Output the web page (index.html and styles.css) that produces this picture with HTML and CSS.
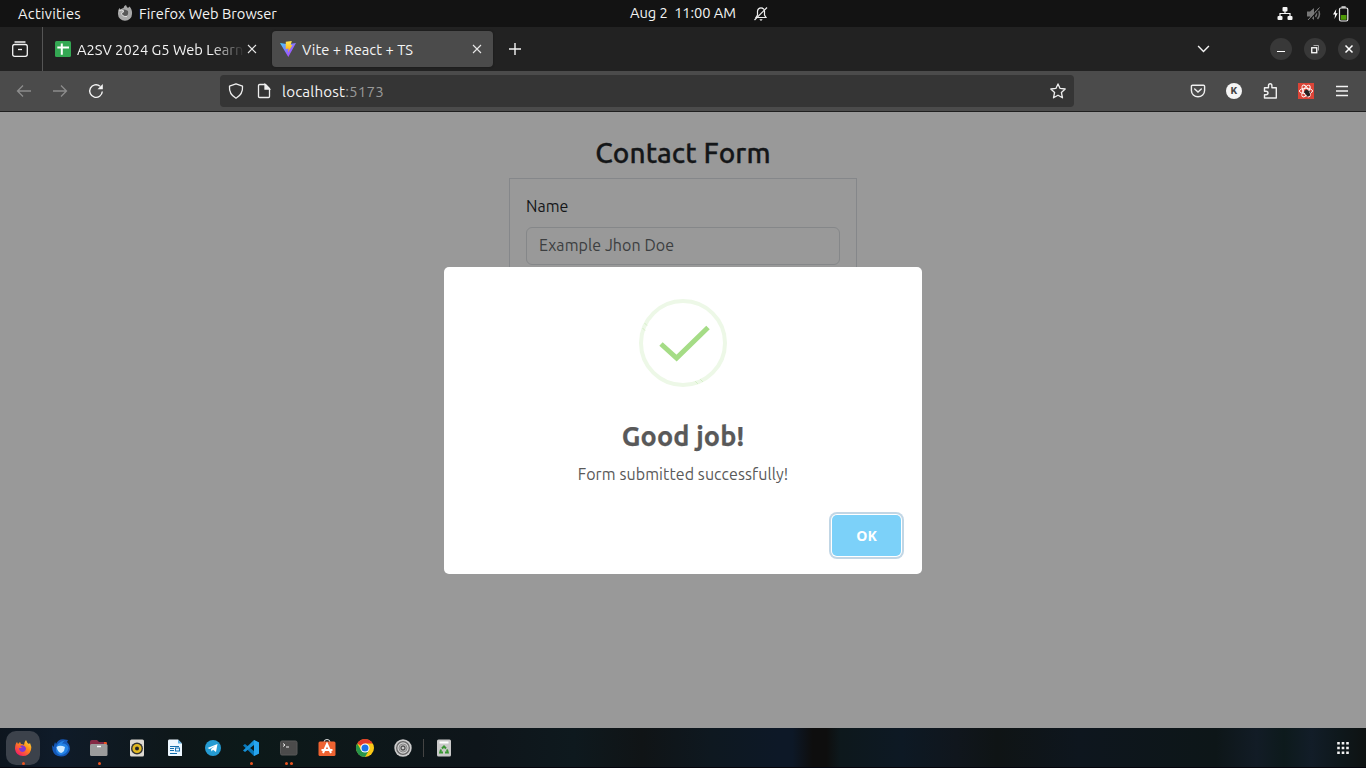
FILE: index.html
```html
<!DOCTYPE html>
<html lang="en">
<head>
<meta charset="utf-8">
<title>Vite + React + TS</title>
<link rel="stylesheet" href="styles.css">
</head>
<body>
<header class="topbar">
  <span class="activities">Activities</span>
  <svg class="i16 app-icon" viewBox="0 0 16 16"><path d="M1 7Q1 3.500 2.500 2L3.500 3.500Q5 2 6.500 2Q7 -.5 9 -1Q9.500 1 11 2L12.500 .5Q15.300 3 15 8A7 6.700 0 0 1 1 8Z" fill="#a8a8a8"/><path d="M5 4Q8 2.500 11 5Q12 10 8 10Q5 10 4.500 7L7 6.500Z" fill="#585858"/><path d="M2 5Q4 3 7 5L4.500 7Q5 11 10 10.500" fill="none" stroke="#ddd"/></svg>
  <span class="appname">Firefox Web Browser</span>
  <span class="clock">Aug 2&nbsp; 11:00 AM</span>
  <svg class="i16 bell" viewBox="0 0 16 16" fill="none" stroke="#eee" stroke-width="1.2"><path d="M3 11.500H13L11.500 9V5Q11 1.800 8 1.800T4.500 5V9Z"/><path d="M1.500 14L14 1.500"/><path d="M6.300 13.300H9.700L8 15Z" fill="#eee" stroke="none"/></svg>
  <div class="tray">
    <svg class="i16" viewBox="0 0 16 16" fill="#f5f5f5"><rect x="5.500" y="1" width="5" height="4.500" rx="1"/><rect x="0.500" y="10" width="5" height="4" rx="1"/><rect x="10.500" y="10" width="5" height="4" rx="1"/><path d="M8 5V7.500M3 10V7.500H13V10" fill="none" stroke="#f5f5f5" stroke-width="1.200"/></svg>
    <svg class="i16" viewBox="0 0 16 16" fill="#777"><path d="M1 5.500H4L8 2V14L4 10.500H1Z"/><path d="M9.500 5Q11.500 8 9.500 11M11.500 3Q15.500 8 11.500 13" fill="none" stroke="#707070" stroke-width="1.500"/><path d="M2.500 15L14.500 2" stroke="#131313" stroke-width="1.200"/><path d="M2 14L13.500 1.500" stroke="#808080"/></svg>
    <svg class="i16" viewBox="0 0 16 16"><path d="M2.300 3L-1 8.500H1.100L.5 13L3.700 7.200H1.700Z" fill="#fff"/><rect x="5.500" y="2" width="8.300" height="13" rx="1.500" fill="none" stroke="#eee" stroke-width="1.200"/><path d="M7.500 1H11.700" stroke="#eee" stroke-width="1.400"/><rect x="6.800" y="9" width="5.700" height="4.800" fill="#4e9a06"/></svg>
  </div>
</header>

<nav class="tabs">
  <div class="view-btn"><svg class="i16" viewBox="0 0 16 16" fill="none" stroke="#f4f4f4" stroke-width="1.300"><path d="M3 1H13" stroke-linecap="round"/><path d="M.7 5.500Q.7 3.500 2.700 3.500H13.300Q15.300 3.500 15.300 5.500V13.300Q15.300 15.300 13.300 15.300H2.700Q.7 15.300 .7 13.300Z"/><path d="M6 8.500H10"/></svg></div>
  <div class="tab tab-first">
    <svg class="i16" viewBox="0 0 16 16"><rect width="16" height="16" rx="1.500" fill="#34a853"/><path d="M6.800 2.500V13.700M2.300 6.500H14" stroke="#fff" stroke-width="2"/></svg>
    <span class="tab-title fade">A2SV 2024 G5 Web Learn</span>
    <svg class="close" viewBox="0 0 10 10"><path d="M1 1L9 9M9 1L1 9"/></svg>
  </div>
  <div class="tab tab-active">
    <svg class="i16" viewBox="0 0 16 16"><defs><linearGradient id="v" x2="1" y2="1"><stop stop-color="#41d1ff"/><stop offset=".5" stop-color="#8a70ff"/><stop offset="1" stop-color="#bd34fe"/></linearGradient><linearGradient id="b" x2="0" y2="1"><stop stop-color="#ffea55"/><stop offset="1" stop-color="#ffa800"/></linearGradient></defs><path d="M0 2L8 3.200L16 2L8.300 16Z" fill="url(#v)"/><path d="M5.800 .7L11.800 0L10.600 4.200L12.500 4L8 11.500L8.600 7.400L5.700 8Z" fill="url(#b)"/></svg>
    <span class="tab-title vite">Vite + React + TS</span>
    <svg class="close" viewBox="0 0 10 10"><path d="M1 1L9 9M9 1L1 9"/></svg>
  </div>
  <svg class="plus" viewBox="0 0 12 12"><path d="M6 0V12M0 6H12" stroke="#f4f4f4" stroke-width="1.400"/></svg>
  <svg class="chev" viewBox="0 0 12 8"><path d="M.6 1L6 6.400L11.400 1" fill="none" stroke="#f4f4f4" stroke-width="1.400"/></svg>
  <div class="win"><svg class="i16" viewBox="0 0 16 16"><path d="M4 10.500H12" stroke="#fff"/></svg></div>
  <div class="win"><svg class="i16" viewBox="0 0 16 16" fill="none"><rect x="4.750" y="6.750" width="5" height="5" stroke="#fff" stroke-width="1.300"/><path d="M6.500 4.500H11.500V9.500" stroke="#aaa"/></svg></div>
  <div class="win"><svg class="i16" viewBox="0 0 16 16"><path d="M4.500 4.500L11.500 11.500M11.500 4.500L4.500 11.500" stroke="#fff" stroke-width="1.500"/></svg></div>
</nav>

<div class="toolbar">
  <svg class="i16 back" viewBox="0 0 16 16" fill="none" stroke="#8c8c8c" stroke-width="1.300"><path d="M15 8H1.500M7 2.500L1.500 8L7 13.500"/></svg>
  <svg class="i16 fwd" viewBox="0 0 16 16" fill="none" stroke="#8c8c8c" stroke-width="1.300"><path d="M1 8H14.500M9 2.500L14.500 8L9 13.500"/></svg>
  <svg class="i16 reload" viewBox="0 0 16 16" fill="none" stroke="#f5f5f5" stroke-width="1.400"><path d="M14.300 8.500A6.300 6.300 0 1 1 12 3.200"/><path d="M14.800 1V6.300H9.500Z" fill="#f5f5f5" stroke="none"/></svg>
  <div class="urlbar">
    <svg class="i16" viewBox="0 0 16 16" fill="none" stroke="#eee" stroke-width="1.300"><path d="M8 .8L14.500 3.200Q15.200 11 8 15.300Q.8 11 1.500 3.200Z" stroke-linejoin="round"/></svg>
    <svg class="i16 doc" viewBox="0 0 16 16" fill="none" stroke="#eee" stroke-width="1.300"><path d="M3.700 1.500H9.500L13.500 5.500V13.500Q13.500 14.500 12.500 14.500H3.700Q2.500 14.500 2.500 13.500V2.500Q2.500 1.500 3.700 1.500Z"/><path d="M9 1.500V6H13.500Z" fill="#eee"/></svg>
    <span class="url">localhost<b>:5173</b></span>
    <svg class="i16 star" viewBox="0 0 16 16" fill="none" stroke="#eee" stroke-width="1.300" stroke-linejoin="round"><path d="M8 .9L10.100 5.400L15.200 6L11.400 9.500L12.500 14.800L8 12.200L3.500 14.800L4.600 9.500L.8 6L5.900 5.400Z"/></svg>
  </div>
  <div class="tools">
    <svg class="i16" viewBox="0 0 16 16" fill="none" stroke="#f0f0f0" stroke-width="1.400" stroke-linecap="round"><path d="M2.500 2.200H13.500Q14.600 2.200 14.600 3.300V7.500A6.600 6.300 0 0 1 1.400 7.500V3.300Q1.400 2.200 2.500 2.200Z"/><path d="M4.700 6L8 9L11.300 6"/></svg>
    <span class="account">K</span>
    <svg class="i16" viewBox="0 0 16 16" fill="none" stroke="#f0f0f0" stroke-width="1.400" stroke-linejoin="round"><path d="M2.500 4.800H6.500V2.800Q6.500 .8 8.200 .8T9.900 2.800V4.800H14.300V15H2.500V11.800H4Q6 11.700 6 10T4 8.200H2.500Z"/></svg>
    <svg class="i16" viewBox="0 0 16 16"><rect width="16" height="16" fill="#db4437"/><g fill="none" stroke="#fff" stroke-width=".9"><ellipse cx="8" cy="8" rx="6.600" ry="2.700"/><ellipse cx="8" cy="8" rx="6.600" ry="2.700" transform="rotate(60 8 8)"/><ellipse cx="8" cy="8" rx="6.600" ry="2.700" transform="rotate(120 8 8)"/></g><ellipse cx="9.300" cy="10" rx="2" ry="3.500" fill="#222" transform="rotate(-35 9.300 10)"/><path d="M6 9L12 12.500M8 7L13 9.500M11 7.500L9 14" stroke="#222" stroke-width=".8"/></svg>
    <svg class="i16 menu" viewBox="0 0 16 16" stroke="#f4f4f4" stroke-width="1.300"><path d="M2 3.500H14M2 8H14M2 12.500H14"/></svg>
  </div>
</div>

<main class="page">
  <h1 class="heading">Contact Form</h1>
  <form class="card">
    <label class="label" for="name">Name</label>
    <input class="field" id="name" type="text" placeholder="Example Jhon Doe">
  </form>
  <section class="modal">
    <svg class="success" viewBox="0 0 88 88" fill="none"><circle cx="44" cy="44" r="42" stroke="#edf8e7" stroke-width="4"/><path d="M22 45L37.600 59L69 28.500" stroke="#a5dc86" stroke-width="5"/><path d="M3.500 29L6 31.500M5.500 24L8 26.500M56.500 82.500L59 85M61.500 80.500L64 83" stroke="#b5e29b" stroke-width=".7" stroke-dasharray=".8 .5"/></svg>
    <h2 class="title">Good job!</h2>
    <p class="message">Form submitted successfully!</p>
    <button class="ok">OK</button>
  </section>
</main>

<footer class="dock">
  <div class="app selected one"><svg viewBox="0 0 18 18"><defs><linearGradient id="f" x1="1" x2=".2" y2="1"><stop stop-color="#ffed45"/><stop offset=".45" stop-color="#ff8a16"/><stop offset="1" stop-color="#f5156c"/></linearGradient></defs><path d="M1 10Q1 5 3 3L4 5L6 3L7 5Q9 5 10 6Q10 3 12 1Q13 4 15 5L16 4Q18 8 17 11Q15 17 9 17Q2 17 1 10Z" fill="url(#f)"/><path d="M6 7Q10 5 12 9Q12 13 8 13Q5 12 5 9L8 9Z" fill="#8138cf"/></svg></div>
  <div class="app"><svg viewBox="0 0 18 18"><path d="M0 6L1.500 8L3 3L4 5Q6 .5 11 .3L16 1L15 3Q19 7 17.500 12Q15 17.500 9 17.500Q2 17 .5 11Z" fill="#1558b8"/><path d="M4 9Q5 3 13 1.500Q11 3 10 4.500Q15 4 16.500 9Q15 16 8 16Q3 14 4 9Z" fill="#2484e6"/><path d="M4.500 8Q8 5.500 13 8L12 12Q10 14 9 14Q5.500 13 4.500 8Z" fill="#cfeaff"/></svg></div>
  <div class="app one"><svg viewBox="0 0 18 18"><path d="M0 3Q0 1 2 1H7L9 3H16Q17 3 17 5V8H0Z" fill="#842944"/><path d="M14 3H16Q17 3 17 5H14Z" fill="#e95420"/><rect x="0" y="5" width="17.500" height="12" rx="1.500" fill="#9b9b9b"/><path d="M7 7.500H11" stroke="#fff" stroke-width="1.500"/></svg></div>
  <div class="app"><svg viewBox="0 0 18 18"><rect x="2" y=".5" width="14" height="17" rx="1.500" fill="#ded9d2"/><circle cx="9" cy="9.500" r="6" fill="#333"/><circle cx="9" cy="9.500" r="3.300" fill="none" stroke="#e2b820" stroke-width="2.600"/><circle cx="9" cy="9.500" r="1.500" fill="#222"/></svg></div>
  <div class="app"><svg viewBox="0 0 18 18"><path d="M3 .5H12L16 4.500V17H3Q2 17 2 16V2Q2 .5 3 .5Z" fill="#edf7ff"/><path d="M12 .5L16 4.500H12Z" fill="#62b0e0"/><path d="M4 7.500H13M4 9.500H8M4 11.500H8M4 14.500H11" stroke="#126dac" stroke-width="1.100"/><rect x="9.500" y="9" width="4" height="3" fill="none" stroke="#1473b5"/></svg></div>
  <div class="app"><svg viewBox="0 0 18 18"><circle cx="9" cy="9" r="8" fill="#259bd2"/><path d="M3.500 9L13.500 5L12 13L9 10.800L7.500 12.500L7 10L11 7L5.600 10Z" fill="#fff"/></svg></div>
  <div class="app one"><svg viewBox="0 0 18 18"><path d="M12 1L17 3.500V14.500L12 17L1 6.500L3 5L12 12Z" fill="#0877b9"/><path d="M12 1L1 11.500L3 13L12 6Z" fill="#1690d6"/><path d="M12 1L17 3.500V14.500L12 17Z" fill="#27a4ee"/></svg></div>
  <div class="app two"><svg viewBox="0 0 18 18"><rect x=".5" y="2" width="16.500" height="14" rx="1.500" fill="#4b4b4b" stroke="#595959"/><path d="M3 4.500L5 6L3 7.500M6 8H9" fill="none" stroke="#eee"/></svg></div>
  <div class="app"><svg viewBox="0 0 18 18"><path d="M6 3Q6 .5 9 .5T12 3" fill="none" stroke="#ddd"/><rect x=".5" y="2.500" width="17" height="14.500" rx="1.500" fill="#ef6331"/><path d="M5 14L9 5L13 14M3.500 11H14.500" fill="none" stroke="#fff" stroke-width="2"/></svg></div>
  <div class="app"><svg viewBox="0 0 18 18"><circle cx="9" cy="9" r="9" fill="#fbc917"/><path d="M9 9L1.200 4.500A9 9 0 0 1 16.800 4.500H9Z" fill="#e13a2d"/><path d="M1.200 4.500A9 9 0 0 0 9 18L13 11.200L5 11Z" fill="#27964b"/><circle cx="9" cy="9" r="4.600" fill="#fff"/><circle cx="9" cy="9" r="3.500" fill="#1a73e8"/></svg></div>
  <div class="app"><svg viewBox="0 0 18 18" fill="none"><circle cx="9" cy="9" r="8.700" fill="#ccc"/><circle cx="9" cy="9" r="6.300" stroke="#666" stroke-width="1.300"/><circle cx="9" cy="9" r="4" stroke="#777" stroke-width=".8"/><circle cx="9" cy="9" r="2" stroke="#555" stroke-width="1.300"/></svg></div>
  <i class="sep"></i>
  <div class="app"><svg viewBox="0 0 18 18"><rect x="2" y=".5" width="14" height="17" rx="1.500" fill="#c9c9c9"/><path d="M4.500 3.500H13.500" stroke="#fff" stroke-width="2"/><path d="M7 9.500L9 7.500L11 9.500M12 10.500L12.800 13.500H10M8 13.500H5.200L6 10.500" fill="none" stroke="#399633" stroke-width="2"/></svg></div>
  <svg class="grid" viewBox="0 0 12 12"><path d="M1.500 0V12M6 0V12M10.500 0V12" stroke="#f2f2f2" stroke-width="2.600" stroke-dasharray="2.600 2.100"/></svg>
</footer>
</body>
</html>
```
FILE: styles.css
```css
* { box-sizing: border-box; }
body { margin: 0; width: 1366px; height: 768px; overflow: hidden; display: flex; flex-direction: column; font-family: Ubuntu, "Noto Sans", sans-serif; color: #f4f4f4; }
svg { display: block; flex: none; overflow: visible; }
span { white-space: nowrap; flex: none; }
.i16 { width: 16px; height: 16px; }

.topbar { height: 27px; background: #131313; display: flex; align-items: center; font-size: 14.667px; line-height: 20px; flex: none; }
.activities { width: 99px; padding-left: 18px; letter-spacing: .28px; }
.app-icon { margin-left: 18px; }
.appname { width: 491px; padding-left: 6px; }
.clock { width: 129px; padding-left: 6px; margin-top: -1px; letter-spacing: -.07px; }
.tray { margin-left: auto; margin-right: 16px; display: flex; gap: 12.5px; }

.tabs { height: 44px; background: #222; display: flex; align-items: center; flex: none; }
.view-btn { width: 43px; height: 44px; padding: 14px 0 0 12px; border-right: 1px solid #555; flex: none; }
.tab { height: 36px; display: flex; align-items: center; border-radius: 4px; padding-left: 8px; flex: none; }
.tab-first { width: 221px; margin-left: 4px; margin-right: 4px; }
.tab-active { width: 221px; background: #4b4b4b; box-shadow: 0 0 2px #151515; }
.tab-title { width: 168px; margin-left: 6px; margin-top: 1px; font-size: 14.667px; line-height: 20px; overflow: hidden; }
.vite { width: 170px; letter-spacing: .05px; }
.fade { -webkit-mask-image: linear-gradient(90deg, #000 80%, transparent); mask-image: linear-gradient(90deg, #000 80%, transparent); }
.close { width: 10px; height: 10px; stroke: #e8e8e8; stroke-width: 1.1; margin-left: 2px; }
.tab-active .close { margin-left: 0; }
.plus { width: 12px; height: 12px; margin-left: 16px; }
.chev { width: 13px; height: 8px; margin-left: auto; margin-right: 60px; }
.win { width: 22px; height: 22px; border-radius: 50%; background: #383838; display: grid; place-items: center; margin-right: 12px; flex: none; }
.win:last-child { margin-right: 6px; }

.toolbar { height: 41px; background: #4b4b4b; border-bottom: 1px solid #1f1f1f; display: flex; align-items: center; flex: none; }
.back { margin-left: 16px; }
.fwd { margin-left: 20px; }
.reload { margin-left: 20px; }
.urlbar { width: 854px; height: 32px; margin-left: 116px; background: #353535; border-radius: 4px; padding: 0 8px; display: flex; align-items: center; flex: none; }
.doc { margin-left: 12px; }
.url { margin-left: 10px; margin-top: 1px; font-size: 15.2px; line-height: 20px; letter-spacing: .15px; }
.url b { font-weight: 400; color: #999; }
.star { margin-left: auto; }
.tools { margin-left: 116px; display: flex; align-items: center; gap: 20px; }
.account { width: 16px; height: 16px; border-radius: 50%; background: #f5f5f5; color: #444; font: 800 9px/16px Inter, sans-serif; text-align: center; }

.page { height: 616px; background: #999; color: #141618; padding-top: 24px; flex: none; position: relative; }
.heading { margin: 0; font-size: 28px; font-weight: 500; line-height: 34px; text-align: center; letter-spacing: .1px; -webkit-text-stroke: .3px; }
.card { width: 348px; height: 380px; margin: 8px auto 0; border: 1px solid #85878a; padding: 15px 16px; }
.label { display: block; font-size: 16px; line-height: 24px; }
.field { display: block; width: 314px; height: 38px; margin-top: 9px; padding: 0 12px 2px; background: transparent; border: 1px solid #858789; border-radius: 6px; font-family: inherit; font-size: 16px; letter-spacing: .08px; }
.field::placeholder { color: #3c3e40; opacity: 1; }
.modal { position: absolute; left: 444px; top: 155px; width: 478px; height: 307px; background: #fff; border-radius: 5px; display: flex; flex-direction: column; align-items: center; padding: 32px 21px 18px; color: #595959; }
.success { width: 88px; height: 88px; }
.title { margin: 31px 0 0; font-size: 27px; line-height: 36px; font-weight: 700; letter-spacing: .15px; -webkit-text-stroke: .25px; }
.message { margin: 9px 0 0; font-size: 16px; line-height: 22px; letter-spacing: .09px; }
.ok { align-self: flex-end; width: 69px; height: 41px; margin-top: auto; border: 0; border-radius: 5px; background: #7cd1f9; box-shadow: 0 0 0 1px #fff, 0 0 0 3px rgba(43,114,165,.29); color: #fff; font: 700 14px "Open Sans", "Noto Sans", sans-serif; }

.dock { height: 40px; border-bottom: 1px solid #05050d; display: flex; padding-left: 4px; padding-top: 3px; background: linear-gradient(90deg, #0d151e 0, #0f1b29 4%, #0e1719 13%, #0c1919 18%, #0e151a 35%, #0e191e 42%, #101416 47%, #0e1820 52%, #0d1827 57%, #0d1827 58%, #0e0e0e 59.5%, #0e0e0e 60.5%, #0d181c 61.5%, #0d1924 66%, #10161d 70%, #0f1415 73%, #0e161e 79%, #0d1618 89%, #121c26 92%, #0d1a1c 94%, #121d28 96%, #0e181c 98%, #0e1212 100%); flex: none; }
.app { width: 34px; height: 34px; margin: 0 2px; border-radius: 10px; display: grid; place-items: center; flex: none; position: relative; }
.app svg { width: 18px; height: 18px; }
.selected { background: #3c424b; }
.one::after, .two::after { content: ""; position: absolute; left: 15.5px; top: 31px; width: 3px; height: 3px; border-radius: 50%; background: #e95420; }
.two::after { left: 13px; box-shadow: 5px 0 #e95420; }
.sep { width: 1px; height: 18px; margin: 8px 1px 0; background: #444; }
.grid { width: 12px; height: 12px; margin: 11px 17px 0 auto; }
```
